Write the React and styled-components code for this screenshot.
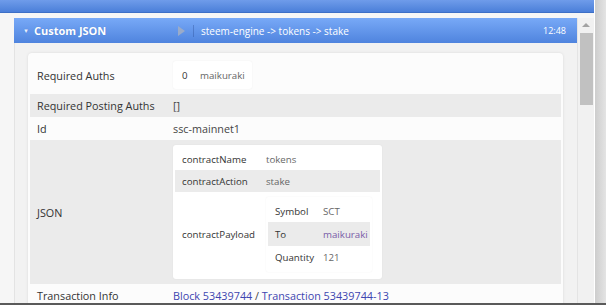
import React from "react";
import styled, { createGlobalStyle } from "styled-components";

const GlobalStyle = createGlobalStyle`
  body {
    margin: 0;
    font-family: "Open Sans", "Liberation Sans", sans-serif;
    color: #333;
  }
`;

export default function App() {
  return (
    <>
      <GlobalStyle />
      <Screen>
        <Main>
          <TopBar />
          <Stage>
            <Panel>
              <Header>
                <Title>
                  <Caret>▼</Caret>
                  Custom JSON
                </Title>
                <PlayIcon viewBox="0 0 7 10">
                  <path d="M0 0 L7 5 L0 10 Z" />
                </PlayIcon>
                <Divider />
                <Path>steem-engine -&gt; tokens -&gt; stake</Path>
                <Time>12:48</Time>
              </Header>
              <PanelBody>
                <Card>
                  <Row $pad>
                    <Key $w={143}>Required Auths</Key>
                    <Value>
                      <Card $w={79} $inner>
                        <Row $h={22}>
                          <Key $w={25} $small>0</Key>
                          <Value $small $muted>maikuraki</Value>
                        </Row>
                      </Card>
                    </Value>
                  </Row>
                  <Row $alt>
                    <Key $w={143}>Required Posting Auths</Key>
                    <Value>[]</Value>
                  </Row>
                  <Row>
                    <Key $w={143}>Id</Key>
                    <Value>ssc-mainnet1</Value>
                  </Row>
                  <Row $alt $pad>
                    <Key $w={143}>JSON</Key>
                    <Value>
                      <Card $w={209} $inner>
                        <Row $h={22}>
                          <Key $w={91} $small>contractName</Key>
                          <Value $small $muted>tokens</Value>
                        </Row>
                        <Row $h={22} $alt>
                          <Key $w={91} $small>contractAction</Key>
                          <Value $small $muted>stake</Value>
                        </Row>
                        <Row $pad $tight>
                          <Key $w={91} $small>contractPayload</Key>
                          <Value>
                            <Card $w={106} $inner>
                              <Row $h={22}>
                                <Key $w={55} $small>Symbol</Key>
                                <Value $small $muted>SCT</Value>
                              </Row>
                              <Row $alt $h={24}>
                                <Key $w={55} $small>To</Key>
                                <Value $small>
                                  <Visited>maikuraki</Visited>
                                </Value>
                              </Row>
                              <Row>
                                <Key $w={55} $small>Quantity</Key>
                                <Value $small $muted>121</Value>
                              </Row>
                            </Card>
                          </Value>
                        </Row>
                      </Card>
                    </Value>
                  </Row>
                  <Row>
                    <Key $w={143}>Transaction Info</Key>
                    <Value>
                      <Link>Block 53439744</Link> / <Link>Transaction 53439744-13</Link>
                    </Value>
                  </Row>
                </Card>
              </PanelBody>
            </Panel>
            <Scrollbar>
              <ArrowUp />
              <Thumb />
            </Scrollbar>
          </Stage>
        </Main>
        <RightEdge />
      </Screen>
    </>
  );
}

const Screen = styled.div`
  width: 606px;
  height: 305px;
  display: flex;
  overflow: hidden;
  box-sizing: border-box;
  border-bottom: 2px solid #5a5a5a;
  background: #f6f6f6;
`;

const Main = styled.div`
  flex: 1;
  display: flex;
  flex-direction: column;
  min-width: 0;
`;

const TopBar = styled.div`
  height: 13px;
  flex: 0 0 13px;
  background: linear-gradient(#6f9cea, #4b7fd9);
  border-bottom: 1px solid #3d6fc6;
  box-sizing: border-box;
`;

const Stage = styled.div`
  flex: 1;
  display: flex;
  padding: 5px 0 0 14px;
  min-height: 0;
`;

const Panel = styled.div`
  width: 563px;
  display: flex;
  flex-direction: column;
`;

const Header = styled.div`
  height: 25px;
  flex: 0 0 25px;
  display: flex;
  align-items: center;
  background: linear-gradient(#78a9f7, #4f84de);
  color: #fff;
`;

const Title = styled.div`
  flex: 0 0 164px;
  box-sizing: border-box;
  padding-left: 9px;
  display: flex;
  align-items: center;
  font-size: 11px;
  font-weight: 700;
  text-shadow: 0 0 1px rgba(40, 80, 160, 0.4);
`;

const Caret = styled.span`
  font-size: 6px;
  margin-right: 5px;
  color: #e8f0ff;
`;

const PlayIcon = styled.svg`
  width: 7px;
  height: 10px;
  fill: #9aabc9;
  margin-right: 8px;
`;

const Divider = styled.div`
  width: 1px;
  height: 12px;
  background: rgba(30, 60, 130, 0.3);
  margin-right: 7px;
`;

const Path = styled.div`
  font-size: 10px;
  flex: 1;
`;

const Time = styled.div`
  font-size: 9px;
  padding-right: 11px;
`;

const PanelBody = styled.div`
  flex: 1;
  background: #f2f2f2;
  border-left: 1px solid #e3e3e3;
  padding: 10px 14px 0 13px;
`;

const Card = styled.div`
  width: ${(p) => (p.$w ? `${p.$w}px` : "auto")};
  box-sizing: border-box;
  background: ${(p) => (p.$inner ? "#ffffff" : "#fcfcfc")};
  border-radius: ${(p) => (p.$inner ? 3 : 4)}px;
  box-shadow: ${(p) =>
    p.$inner ? "0 0 2px rgba(0,0,0,0.06)" : "0 0 3px rgba(0,0,0,0.1)"};
  padding: 3px 2px;
`;

const Row = styled.div`
  display: flex;
  align-items: center;
  min-height: ${(p) => p.$h || 23}px;
  padding: ${(p) => (p.$pad ? (p.$tight ? "5px 0 4px" : "5px 0") : "0")};
  background: ${(p) => (p.$alt ? "#ebebeb" : "transparent")};
`;

const Key = styled.div`
  flex: 0 0 ${(p) => p.$w}px;
  box-sizing: border-box;
  padding-left: 7px;
  font-size: ${(p) => (p.$small ? 9.7 : 10.8)}px;
  color: #333;
`;

const Value = styled.div`
  font-size: ${(p) => (p.$small ? 9.7 : 10.8)}px;
  color: ${(p) => (p.$muted ? "#666" : "#444")};
`;

const Link = styled.span`
  color: #3d45b0;
`;

const Visited = styled.span`
  color: #7a5ca8;
`;

const Scrollbar = styled.div`
  width: 17px;
  flex: 0 0 17px;
  background: #f1f1f1;
  border-left: 1px solid #e4e4e4;
  box-sizing: border-box;
  display: flex;
  flex-direction: column;
  align-items: center;
`;

const ArrowUp = styled.div`
  width: 0;
  height: 0;
  margin: 5px 0 6px;
  border-left: 4px solid transparent;
  border-right: 4px solid transparent;
  border-bottom: 4px solid #a3a3a3;
`;

const Thumb = styled.div`
  width: 13px;
  height: 72px;
  background: #c1c1c1;
`;

const RightEdge = styled.div`
  width: 12px;
  flex: 0 0 12px;
  border-left: 1px solid #ffffff;
  box-sizing: border-box;
  background: linear-gradient(to right, #cdcdcd, #e4e4e4);
`;
